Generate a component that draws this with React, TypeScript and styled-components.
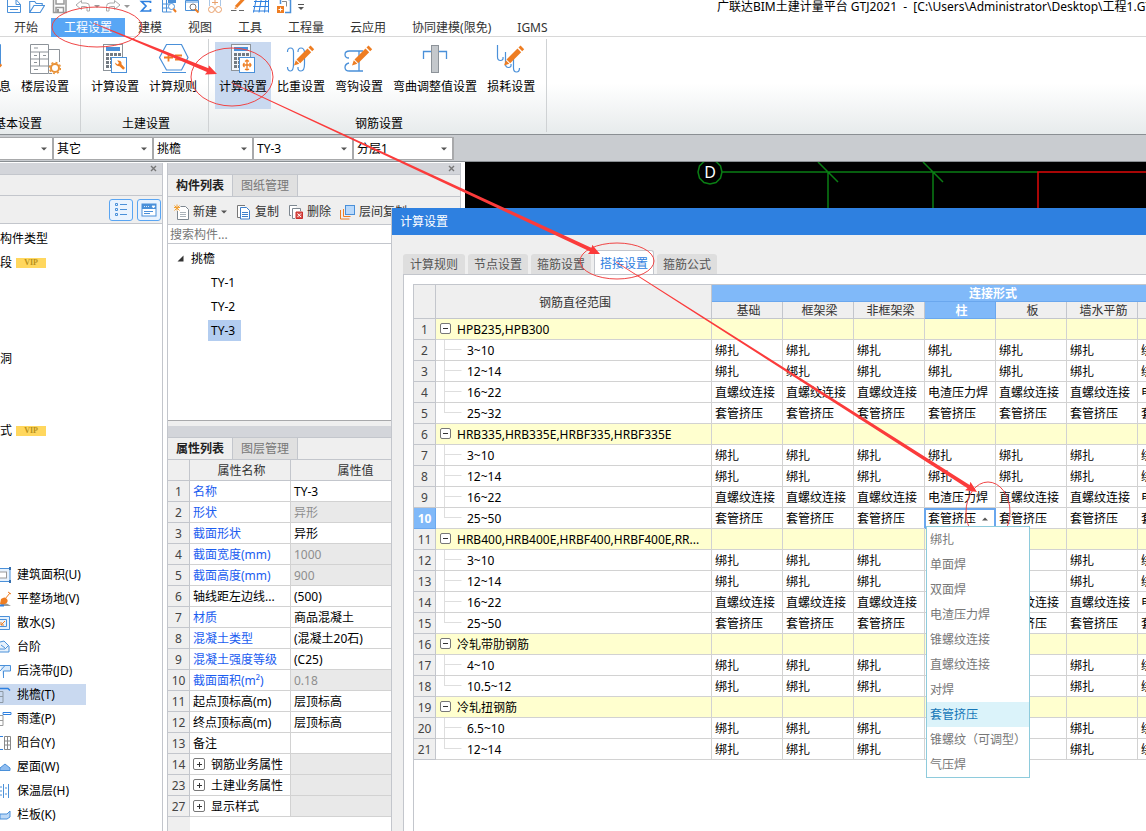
import React from "react";
import styled, { createGlobalStyle, css } from "styled-components";

const LINE = "#c3c6cc";
const PANEL = "#efefef";
const STRIP = "#d3d5da";
const BLUE = "#2e80e0";
const ICON_BLUE = "#4a90d9";
const ORANGE = "#ee7d22";
const GREY = "#8d9399";

const Global = createGlobalStyle`
  *, *::before, *::after { box-sizing: border-box; }
  html, body { margin: 0; height: 100%; overflow: hidden; }
  body, button, input, select, table {
    font-family: "Noto Sans", "Noto Sans CJK SC", sans-serif;
    font-size: 12px;
    line-height: 16px;
    color: #000;
  }
  button, input, select { margin: 0; padding: 0; border: 0; background: none; border-radius: 0; }
  button { white-space: nowrap; }
  ul { list-style: none; margin: 0; padding: 0; }
  svg { display: block; flex: none; }
`;

const Shell = styled.div`
  position: relative;
  display: flex;
  flex-direction: column;
  height: 100vh;
  overflow: hidden;
  background: #fff;
`;

/* ---------- title bar and ribbon ---------- */

const TitleBar = styled.header`
  display: flex;
  height: 18px;
  padding-left: 2px;
  overflow: hidden;
`;

const QuickButton = styled.button<{ $narrow?: boolean; $gap?: boolean }>`
  display: flex;
  justify-content: center;
  flex: none;
  width: ${(p) => (p.$narrow ? 7 : 23)}px;
  margin-left: ${(p) => (p.$gap ? 3 : 0)}px;
`;

const Title = styled.h1`
  margin: 0 0 0 412px;
  font-size: 12px;
  line-height: 14px;
  font-weight: 400;
  white-space: pre;
`;

const RibbonTabs = styled.nav`
  display: flex;
  height: 19px;
  padding-left: 1px;
  border-bottom: 1px solid #d8d8d8;
`;

const RibbonTab = styled.button<{ $active?: boolean }>`
  height: 19px;
  padding: 0 13px;
  line-height: 19px;
  color: ${(p) => (p.$active ? "#fff" : "#333")};
  background: ${(p) => (p.$active ? "#58a6f5" : "transparent")};
`;

const Ribbon = styled.div`
  display: flex;
  height: 98px;
  padding-top: 2px;
  background: linear-gradient(#fff 48%, #e7ebec);
  border-bottom: 1px solid #8a8f93;
  overflow: hidden;
`;

const RibbonGroup = styled.section<{ $cut?: boolean }>`
  display: flex;
  flex: none;
  flex-direction: column;
  justify-content: space-between;
  height: 93px;
  padding: 3px 7px 0 6px;
  border-right: 1px solid #cfd2d4;
  margin-left: ${(p) => (p.$cut ? -47 : 0)}px;
`;

const RibbonItems = styled.div`
  display: flex;
  gap: 2px;
`;

const RibbonButton = styled.button<{ $active?: boolean }>`
  display: flex;
  flex-direction: column;
  align-items: center;
  gap: 4px;
  height: 67px;
  padding: 1px 4px 0;
  background: ${(p) => (p.$active ? "#c9d9f0" : "transparent")};
`;

const GroupName = styled.h2`
  margin: 0;
  padding-left: 4px;
  font-size: 12px;
  font-weight: 400;
  text-align: center;
`;

/* ---------- filter bar ---------- */

const FilterBar = styled.div`
  display: flex;
  height: 27px;
  padding-top: 2px;
  background: #c9ccd0;
  border-bottom: 1px solid #8a8f93;
`;

const Combo = styled.label<{ $first?: boolean }>`
  display: grid;
  align-items: center;
  flex: none;
  width: ${(p) => (p.$first ? 54 : 100)}px;
  height: 23px;
  background: #fff;
  border: solid #a8a9ab;
  border-width: 1px 2px 1px 0;
  & > * { grid-area: 1 / 1; }
  & > svg { justify-self: end; margin-right: 5px; pointer-events: none; }
`;

const ComboSelect = styled.select`
  appearance: none;
  width: 100%;
  height: 21px;
  padding-left: 3px;
  outline: 0;
`;

/* ---------- docked panels ---------- */

const Main = styled.main`
  display: flex;
  flex: 1;
  min-height: 0;
  padding-top: 1px;
`;

const NavPanel = styled.aside`
  flex: none;
  width: 163px;
  border-right: 1px solid ${LINE};
  overflow: hidden;
`;

const Strip = styled.div`
  display: flex;
  justify-content: flex-end;
  align-items: center;
  height: 12px;
  padding-right: 5px;
  background: ${STRIP};
  border-bottom: 1px solid ${LINE};
`;

const NavBlank = styled.div`
  height: 21px;
  background: ${PANEL};
  border-bottom: 1px solid ${LINE};
`;

const NavTools = styled.div`
  display: flex;
  justify-content: flex-end;
  gap: 4px;
  height: 28px;
  padding: 3px 1px 0 0;
  background: ${PANEL};
  border-bottom: 1px solid ${LINE};
`;

const ToggleButton = styled.button`
  display: flex;
  align-items: center;
  justify-content: center;
  width: 24px;
  height: 22px;
  border: 1px solid #5aa5f2;
  border-radius: 3px;
  background: #e9f3fe;
`;

const NavList = styled.ul`
  padding-top: 2px;
`;

const NavRow = styled.li`
  display: flex;
  align-items: center;
  height: 24px;
`;

const NavButton = styled.button<{ $active?: boolean }>`
  display: flex;
  align-items: center;
  gap: 4px;
  width: ${(p) => (p.$active ? "86px" : "auto")};
  height: 21px;
  padding-top: 2px;
  background: ${(p) => (p.$active ? "#c9d9f0" : "transparent")};
`;

const Vip = styled.span`
  width: 30px;
  height: 10px;
  background: #ffd75e;
  color: #b8901c;
  font: 700 8px/10px "Liberation Serif", serif;
  text-align: center;
`;

const ComponentPanel = styled.aside`
  display: flex;
  flex: none;
  flex-direction: column;
  width: 294px;
  margin: 0 4px;
  background: ${PANEL};
  border: solid ${LINE};
  border-width: 0 1px;
`;

const DockTabs = styled.div`
  display: flex;
  height: 22px;
  border-bottom: 1px solid ${LINE};
`;

const DockTab = styled.button<{ $active?: boolean }>`
  width: 65px;
  border-right: 1px solid ${LINE};
  line-height: 21px;
  ${(p) =>
    p.$active
      ? css`font-weight: 700; color: #222;`
      : css`background: #e0e0e0; color: #777;`}
`;

const DockTools = styled.div`
  display: flex;
  align-items: center;
  gap: 9px;
  height: 28px;
  padding: 2px 0 0 6px;
  border-bottom: 1px solid ${LINE};
  overflow: hidden;
`;

const ToolButton = styled.button`
  display: flex;
  align-items: center;
  gap: 4px;
  color: #333;
`;

const Search = styled.input`
  flex: none;
  height: 19px;
  padding-left: 2px;
  background: #fff;
  border-bottom: 1px solid ${LINE};
  outline: 0;
  &::placeholder { color: #777; opacity: 1; }
`;

const Tree = styled.ul`
  flex: none;
  height: 177px;
  margin-bottom: 5px;
  padding-top: 2px;
  background: #fff;
  border-bottom: 1px solid #a8a9ab;
`;

const TreeRow = styled.li<{ $root?: boolean }>`
  display: flex;
  align-items: center;
  gap: 7px;
  height: 24px;
  padding-left: ${(p) => (p.$root ? 9 : 40)}px;
`;

const TreeItem = styled.button<{ $active?: boolean; $leaf?: boolean }>`
  min-width: ${(p) => (p.$leaf ? 33 : 0)}px;
  height: 21px;
  padding: 2px ${(p) => (p.$leaf ? 3 : 0)}px 0;
  text-align: left;
  background: ${(p) => (p.$active ? "#b3cdf0" : "transparent")};
`;

const GridTable = styled.table`
  table-layout: fixed;
  border-collapse: separate;
  border-spacing: 0;
  th, td {
    height: 21px;
    padding: 2px 0 0 3px;
    border: solid #d2d2d2;
    border-width: 0 1px 1px 0;
    font-weight: 400;
    text-align: left;
    white-space: nowrap;
    line-height: 18px;
  }
  thead th {
    background: ${PANEL};
    border-color: ${LINE};
    text-align: center;
    color: #333;
  }
`;

const PropTable = styled(GridTable)`
  width: 250px;
  background: #fff;
`;

const NumberCell = styled.th<{ $active?: boolean }>`
  && {
    padding: 2px 0 0;
    background: ${(p) => (p.$active ? "#80b9f9" : PANEL)};
    border-color: ${(p) => (p.$active ? "#6aa7ee" : LINE)};
    color: ${(p) => (p.$active ? "#fff" : "#444")};
    font-weight: ${(p) => (p.$active ? 700 : 400)};
    text-align: center;
  }
`;

const PropName = styled.td<{ $linked?: boolean }>`
  color: ${(p) => (p.$linked ? "#1a5cf0" : "#000")};
`;

const PropValue = styled.td<{ $locked?: boolean }>`
  color: #000;
  ${(p) => p.$locked && css`background: #e9e9e9; color: #8e8e8e;`}
`;

const Expandable = styled.span`
  display: flex;
  align-items: flex-start;
  gap: 6px;
  height: 18px;
`;

const Expander = styled.button<{ $large?: boolean }>`
  display: grid;
  place-items: center;
  width: ${(p) => (p.$large ? 12 : 11)}px;
  height: ${(p) => (p.$large ? 12 : 11)}px;
  margin-top: 2px;
  border: 1px solid #777;
  border-radius: 2px;
  background: #fff;
`;

const BelowTable = styled.div`
  flex: 1;
  min-height: 0;
  border-left: 22px solid ${PANEL};
  background: #fff;
`;

const Canvas = styled.div`
  flex: 1;
  min-width: 0;
  margin-top: -1px;
  background: #000;
  overflow: hidden;
`;

/* ---------- settings window ---------- */

const Window = styled.section`
  position: absolute;
  left: 391px;
  top: 208px;
  right: 0;
  bottom: 0;
  display: flex;
  flex-direction: column;
  background: ${PANEL};
  border-left: 1px solid ${LINE};
  overflow: hidden;
`;

const WindowTitle = styled.h2`
  flex: none;
  height: 27px;
  margin: 0 0 0 -1px;
  padding-left: 9px;
  background: ${BLUE};
  color: #fff;
  font-size: 12px;
  line-height: 27px;
  font-weight: 400;
`;

const WindowTabs = styled.div`
  display: flex;
  align-items: flex-end;
  flex: none;
  gap: 3px;
  height: 40px;
  margin-bottom: -1px;
  padding-left: 11px;
`;

const WindowTab = styled.button<{ $active?: boolean; $first?: boolean }>`
  width: ${(p) => (p.$first ? 62 : 60)}px;
  height: 20px;
  margin-bottom: 1px;
  line-height: 21px;
  border-radius: 3px 3px 0 0;
  background: #dedede;
  color: #555;
  ${(p) =>
    p.$active &&
    css`
      height: 25px;
      margin-bottom: 0;
      line-height: 26px;
      background: #fff;
      color: ${BLUE};
      border: solid ${LINE};
      border-width: 1px 1px 0;
    `}
`;

const WindowBody = styled.div`
  display: flex;
  flex: 1;
  min-height: 0;
  margin-left: 11px;
  padding: 9px 0 0 9px;
  background: #fff;
  border: solid ${LINE};
  border-width: 1px 0 0 1px;
`;

const GridFrame = styled.div`
  flex: 1;
  min-width: 0;
  border: solid ${LINE};
  border-width: 1px 0 0 1px;
  overflow: hidden;
`;

const LapTable = styled(GridTable)`
  width: 858px;
`;

const HeadCell = styled.th<{ $active?: boolean }>`
  && {
    height: 17px;
    line-height: 14px;
    ${(p) =>
      p.$active &&
      css`
        background: #80b9f9;
        border-color: #6aa7ee;
        color: #fff;
        font-weight: 700;
      `}
  }
`;

const CategoryRow = styled.tr`
  td { background: #ffffcf; }
`;

const RangeCell = styled.td<{ $branch?: boolean }>`
  && { padding: ${(p) => (p.$branch ? 0 : 2)}px 0 0 4px; }
`;

const RangeText = styled.span`
  display: flex;
  gap: 4px;
  height: 20px;
  line-height: 22px;
`;

const EditCell = styled.td`
  && {
    position: relative;
    padding: 0;
    border-color: #6aa7ee;
  }
`;

const CellCombo = styled.label`
  display: grid;
  align-items: center;
  height: 20px;
  margin-left: -1px;
  border: solid #6aa7ee;
  border-width: 2px 1px 0 2px;
  & > * { grid-area: 1 / 1; }
  & > svg { justify-self: end; margin-right: 6px; pointer-events: none; }
`;

const CellSelect = styled.select`
  appearance: none;
  width: 100%;
  height: 18px;
  padding-left: 2px;
  outline: 0;
`;

const Menu = styled.ul`
  position: absolute;
  z-index: 2;
  left: 1px;
  top: 18px;
  width: 104px;
  background: #fff;
  border: 1px solid #8ecbdc;
`;

const MenuItem = styled.li<{ $active?: boolean }>`
  height: 25px;
  padding-left: 3px;
  line-height: 25px;
  color: ${(p) => (p.$active ? "#1577b8" : "#777")};
  background: ${(p) => (p.$active ? "#dbf3fa" : "#fff")};
`;

const Markup = styled.svg`
  position: absolute;
  left: 0;
  top: 0;
  overflow: visible;
  pointer-events: none;
`;

/* ---------- icons ---------- */

const Caret = ({ up, color = "#555" }: { up?: boolean; color?: string }) => (
  <svg width="6" height="4" viewBox="0 0 6 4">
    <path d={up ? "M0 3.5h6L3 .5z" : "M0 .5h6L3 3.5z"} fill={color} />
  </svg>
);

const Cross = () => (
  <svg width="7" height="7" viewBox="0 0 7 7">
    <path d="M1 1l5 5M6 1L1 6" stroke="#777" strokeWidth="1.4" />
  </svg>
);

const quickArt: Record<string, React.ReactNode> = {
  new: (
    <g fill="none" stroke={ICON_BLUE}>
      <path d="M1.500 -1v13.500h13V4.500L10 -.5M1.500 6.500h13M4 9.500h8M10 0v4.500h4.500" />
    </g>
  ),
  open: <path d="M.7 12V1.500h5l1.500 2h6V5.500M.7 12.500h10.500L15.500 5.500H5z" fill="none" stroke={ICON_BLUE} strokeWidth="1.100" />,
  save: (
    <g fill="none" stroke="#999">
      <path d="M1.500 -2v14.500h12.500V-2" strokeWidth="1.500" />
      <path d="M4 -1v5h8v-5M4 12V7.500h7.500V12" strokeWidth="1.500" />
      <path d="M6 9v3" strokeWidth="2" />
    </g>
  ),
  undo: <path d="M1 5L6.500 .5v2.500h4.500q3.500 0 3.500 3.500v4.500h-2.500v-3q0-1.500-1.500-1.500h-4v3z" fill="none" stroke="#aaa" />,
  redo: <path d="M15 5L9.500 .5v2.500h-4.500q-3.500 0-3.500 3.500v4.500h2.500v-3q0-1.500 1.500-1.500h4v3z" fill="none" stroke="#aaa" />,
  sum: <path d="M12.500 3V1.500h-9L8 6l-4.500 5h9V9" fill="none" stroke={BLUE} strokeWidth="1.700" />,
  sheetFind: (
    <g fill="none" stroke={ICON_BLUE}>
      <path d="M1.500 -1v13h9M5.500 -1v13M1.500 4h8M1.500 8h6" />
      <rect x="7" y="-1" width="8" height="4" fill={ICON_BLUE} stroke="none" />
      <circle cx="10.500" cy="6.500" r="3" fill="#fff" />
      <path d="M12.500 9l2.500 3" stroke={ORANGE} strokeWidth="2" />
    </g>
  ),
  windowFind: (
    <g fill="none" stroke={ICON_BLUE}>
      <path d="M1.500 .5h13v10h-13zM1.500 2h13" />
      <circle cx="9" cy="7" r="3" fill="#fff" stroke="#777" />
      <path d="M11 9l3.500 3.500" stroke={ORANGE} strokeWidth="2" />
    </g>
  ),
  glasses: (
    <g fill="none" stroke="#e9a06b">
      <path d="M2.500 6V-1h11v7" stroke="#a9c6e6" />
      <path d="M5 2.500h6M8 0v5" />
      <circle cx="4.500" cy="9.500" r="3" />
      <circle cx="11.500" cy="9.500" r="3" />
    </g>
  ),
  pencil: (
    <g fill="none">
      <path d="M13.500 -1L6 7" stroke={ORANGE} strokeWidth="3" />
      <path d="M4.500 9l.5-2 2 1.500z" fill={ORANGE} />
      <path d="M1 10.500h5.500M9 10.500h5" stroke="#666" />
    </g>
  ),
  mesh: <path d="M3.500 -2L.5 12.500M8.500 -2L6 12.500M13 -2L11.500 12.500M15.500 -2v14.500M1 1.500h14.500M0 6.500h15.500M0 11h15.500" fill="none" stroke={BLUE} />,
  addSheet: (
    <g fill="none">
      <path d="M4.500 4V-1M12 -.5h2.500V12.500H9" stroke={ICON_BLUE} strokeWidth="1.500" />
      <path d="M6 1.500h4.500v5" stroke="#888" />
      <rect x="1" y="6" width="7" height="7" fill={ORANGE} />
      <path d="M4.500 7.500v4M2.500 9.500h4" stroke="#fff" />
    </g>
  ),
};

const QuickIcon = ({ name }: { name: string }) => (
  <svg width="16" height="14" viewBox="0 0 16 14">{quickArt[name]}</svg>
);

const SmallCaret = ({ bar }: { bar?: boolean }) => (
  <svg width="7" height="14" viewBox="0 0 7 14">
    {bar && <path d="M0 4.500h6" stroke="#555" />}
    <path d={bar ? "M0 7h6L3 10z" : "M0 5h6L3 8z"} fill={bar ? "#555" : "#999"} />
  </svg>
);

const Calculator = ({ fill = "#fff" }: { fill?: string }) => (
  <g>
    <rect x="4.500" y="1.500" width="19" height="26" fill={fill} stroke={GREY} />
    <rect x="7" y="4" width="14" height="4" fill={ICON_BLUE} />
    {[10, 14, 18, 22].map((y) =>
      [7, 11, 15, 19].map((x) => <rect key={`${x}-${y}`} x={x} y={y} width="3" height="3" fill="#737a82" />)
    )}
    <rect x="12.500" y="14.500" width="15" height="15" fill="#fff" stroke={ICON_BLUE} />
  </g>
);

const Pencil = () => (
  <g fill={ORANGE}>
    <path d="M9 22.500l1.800-5.300 3.500 3.500z" />
    <path d="M11.500 16.500L22.500 5.500l3.700 3.700-11 11z" />
    <path d="M23.500 4.500l2-2 3.700 3.700-2 2z" />
  </g>
);

const ribbonArt: Record<string, React.ReactNode> = {
  info: (
    <g>
      <path d="M6 1.500h23.500v22" fill="none" stroke={ICON_BLUE} />
      <path d="M26 24.500l4-4 1 2-4 4z" fill={ORANGE} />
    </g>
  ),
  floors: (
    <g fill="none" stroke={GREY}>
      <path d="M1.500 1.500h18v29h-18zM20 6.500h10.500V19M1.500 9h18M1.500 16h18M1.500 23h18M10.500 9v14M20 23h2" />
      <path d="M5 5h4M5 12.500h3M14 12.500h3M5 19.500h3M5 26.500h4" />
      <path d="M20 30.500h3" />
      <circle cx="26" cy="25" r="4" stroke="#e99238" strokeWidth="2" />
      <circle cx="26" cy="25" r="5.500" stroke="#e99238" strokeWidth="1.500" strokeDasharray="2 2.300" />
    </g>
  ),
  calc: (
    <g>
      <Calculator />
      <path d="M16 19.500l2.500 2 1.500-1.500-1.800-2.500q3.500-.5 4.300 2v1.800l3.500 3.700-1.800 1.800-3.700-3.500q-4 0-4.500-3.800z" fill={ORANGE} />
    </g>
  ),
  calcRebar: (
    <g>
      <Calculator fill="#f4f7fc" />
      <path d="M20 17.500v9M16 22h8.500M17.500 20q-2.500 2 0 4M22.500 20q2.500 2 0 4M18 18.500l2-1.500 2 1.500M18 26q2 1.500 4 0" fill="none" stroke={ORANGE} strokeWidth="1.300" />
    </g>
  ),
  rules: (
    <g fill="none" stroke={ICON_BLUE}>
      <path d="M2.500 14.500L9.500 1.500h15l6.500 13-6.500 12.500h-15zM5 29.500h24" strokeWidth="1.200" />
      <path d="M7 14.500h9M11.500 10.500v8M18 12.500h7M18 16.500h7" stroke={ORANGE} strokeWidth="1.800" />
    </g>
  ),
  weight: (
    <g>
      <path d="M2.500 9q0-4 3-4t3 4v12q0 7-3 7t-3-4M13 9q0-4 3-4t3.500 4v12q0 7-3.500 7t-3-4" fill="none" stroke={ICON_BLUE} strokeWidth="1.200" />
      <Pencil />
    </g>
  ),
  hook: (
    <g>
      <path d="M20 8H6.500Q2 8 2 11.500T6 15M20 28H6.500Q2 28 2 24.500T6 20M16 8v20" fill="none" stroke={ICON_BLUE} strokeWidth="1.300" />
      <Pencil />
    </g>
  ),
  bend: (
    <g>
      <path d="M4.500 16V8.500h23V16" fill="none" stroke={ICON_BLUE} strokeWidth="1.300" />
      <rect x="12.500" y="2.500" width="7" height="27" fill="#c4c8cc" stroke={GREY} />
    </g>
  ),
  loss: (
    <g>
      <path d="M2.500 2v12q0 3.500 3 3.500T8 14M10.500 9v12q0 3.500 3 3.500T16 21M18.500 16v9q0 4 3 4t3-4" fill="none" stroke={ICON_BLUE} strokeWidth="1.200" />
      <Pencil />
    </g>
  ),
};

const RibbonIcon = ({ name }: { name: string }) => (
  <svg width="32" height="32" viewBox="0 0 32 32">{ribbonArt[name]}</svg>
);

const navArt: Record<string, React.ReactNode> = {
  area: (
    <g fill="none">
      <path d="M0 1.500h10v13H0" stroke={ICON_BLUE} fill="#e6f1fc" />
      <rect x="-3" y="5" width="9.500" height="6" stroke="#999" fill="#fff" />
      <path d="M9 0h2v3H9zM9 13h2v3H9z" fill="#376fae" />
    </g>
  ),
  level: (
    <g>
      <path d="M0 15q3-6 11 0z" fill="#999" />
      <path d="M1 8q4-3 6 0t-2 5q-3 1-5 0z" fill={ORANGE} />
      <path d="M5 8l5-6M8 1l3 2" stroke={ORANGE} />
      <path d="M0 14.500h4" stroke={BLUE} strokeWidth="2" />
    </g>
  ),
  apron: (
    <g fill="none">
      <path d="M0 1.500h9.500v13H0M0 4.500h6.500v7H0" stroke={ICON_BLUE} fill="#e6f1fc" />
      <path d="M5 6L1 10M1 7v3h3" stroke={ORANGE} />
    </g>
  ),
  steps: <path d="M0 3l4-1 5 5v6H0M0 10h5l3-3M1 6l4 3" fill="#e6f1fc" stroke={ICON_BLUE} />,
  strip: <path d="M0 2.500h10.500v5.500H3.500v7M0 8l5-5.500" fill="#d9eafb" stroke={ICON_BLUE} />,
  eave: (
    <g fill="none" stroke="#8d99a5">
      <path d="M0 4.500h3v11H0M0 9.500h3" />
      <path d="M0 1.500h8l2 2" stroke={BLUE} strokeWidth="1.500" />
    </g>
  ),
  canopy: (
    <g fill="none" stroke="#999">
      <path d="M0 4.500h3v10H0M0 9.500h3" />
      <path d="M3 1.500h8v2H3z" stroke={BLUE} />
    </g>
  ),
  balcony: (
    <g fill="none" stroke="#888">
      <path d="M4.500 1.500h6v13h-6zM7.500 1.500v13M4.500 6h6M4.500 10h6" />
      <path d="M0 1.500h3M0 14.500h3" stroke={BLUE} />
    </g>
  ),
  roof: <path d="M0 9l5-4 5 4v2.500H0z" fill="#8fbdf0" stroke={ICON_BLUE} />,
  insulation: <path d="M0 4h2M0 8h2M0 12h2M3.500 1v14M8.500 1v14M5 5h2M5 11h2" stroke={ICON_BLUE} />,
  slab: <path d="M0 7h7l3-3v6l-3 2H0z" fill="#bcd8f6" stroke={ICON_BLUE} />,
};

const dockArt: Record<string, React.ReactNode> = {
  new: (
    <g fill="none" stroke="#7d8790">
      <path d="M6.500 2.500h5l3 3v10h-11V7" fill="#fff" />
      <path d="M6 8.500h6M6 10.500h6M6 12.500h6" stroke="#aab2b9" />
      <path d="M.5 1.500l5 5M5.500 1.500l-5 5M3 .5v6M0 3.500h6" stroke="#f2a033" />
    </g>
  ),
  copy: (
    <g fill="#fff" stroke="#3d7fcb">
      <path d="M9 1.500H1.500v12H4" stroke="#777" />
      <path d="M4.500 3.500h6l3 3v8.500h-9z" />
      <path d="M6 8.500h6M6 10.500h6M6 12.500h6" />
    </g>
  ),
  remove: (
    <g fill="#fff" stroke="#7d8790">
      <path d="M9 1.500H1.500v10H3" />
      <path d="M12.500 7V4.500h-8v10H7" />
      <path d="M8 8h6.500v6.500H8z" fill="#d9534f" stroke="#c9302c" />
      <path d="M9.500 9.500l3.500 3.500M13 9.500L9.500 13" stroke="#fff" />
    </g>
  ),
  layer: (
    <g fill="none">
      <path d="M.5 6v9h9" stroke={ORANGE} />
      <path d="M3.500 5v7.500h7" stroke={ORANGE} />
      <rect x="5.500" y="1.500" width="9" height="9" fill="#b9d9fb" stroke={ICON_BLUE} />
    </g>
  ),
};

const DockIcon = ({ name }: { name: string }) => (
  <svg width="15" height="16" viewBox="0 0 15 16">{dockArt[name]}</svg>
);

const Sign = ({ plus }: { plus?: boolean }) => (
  <svg width="5" height="5" viewBox="0 0 5 5">
    <path d={plus ? "M0 2.500h5M2.500 0v5" : "M0 2.500h5"} stroke="#333" />
  </svg>
);

const Branch = ({ last }: { last?: boolean }) => (
  <svg width="23" height="20" viewBox="0 0 23 20">
    <path d={last ? "M4.500 0v10M4.500 9.500h17" : "M4.500 0v20M4.500 9.500h17"} stroke="#dedede" fill="none" />
  </svg>
);

/* ---------- data ---------- */

const ribbonTabs = ["开始", "工程设置", "建模", "视图", "工具", "工程量", "云应用", "协同建模(限免)", "IGMS"];

const ribbonGroups = [
  { name: "基本设置", items: [["info", "工程信息"], ["floors", "楼层设置"]] },
  { name: "土建设置", items: [["calc", "计算设置"], ["rules", "计算规则"]] },
  {
    name: "钢筋设置",
    items: [["calcRebar", "计算设置"], ["weight", "比重设置"], ["hook", "弯钩设置"], ["bend", "弯曲调整值设置"], ["loss", "损耗设置"]],
  },
];

type NavEntry = { text?: string; vip?: boolean; icon?: string };
const navRows: NavEntry[] = [
  { text: "构件类型" }, { text: "段", vip: true }, {}, {}, {}, { text: "洞" }, {}, {},
  { text: "式", vip: true }, {}, {}, {}, {}, {},
  { icon: "area", text: "建筑面积(U)" },
  { icon: "level", text: "平整场地(V)" },
  { icon: "apron", text: "散水(S)" },
  { icon: "steps", text: "台阶" },
  { icon: "strip", text: "后浇带(JD)" },
  { icon: "eave", text: "挑檐(T)" },
  { icon: "canopy", text: "雨蓬(P)" },
  { icon: "balcony", text: "阳台(Y)" },
  { icon: "roof", text: "屋面(W)" },
  { icon: "insulation", text: "保温层(H)" },
  { icon: "slab", text: "栏板(K)" },
];

type Prop = { no: number; name: string; value?: string; linked?: boolean; locked?: boolean; group?: boolean };
const props: Prop[] = [
  { no: 1, name: "名称", value: "TY-3", linked: true },
  { no: 2, name: "形状", value: "异形", linked: true, locked: true },
  { no: 3, name: "截面形状", value: "异形", linked: true },
  { no: 4, name: "截面宽度(mm)", value: "1000", linked: true, locked: true },
  { no: 5, name: "截面高度(mm)", value: "900", linked: true, locked: true },
  { no: 6, name: "轴线距左边线...", value: "(500)" },
  { no: 7, name: "材质", value: "商品混凝土", linked: true },
  { no: 8, name: "混凝土类型", value: "(混凝土20石)", linked: true },
  { no: 9, name: "混凝土强度等级", value: "(C25)", linked: true },
  { no: 10, name: "截面面积(m²)", value: "0.18", linked: true, locked: true },
  { no: 11, name: "起点顶标高(m)", value: "层顶标高" },
  { no: 12, name: "终点顶标高(m)", value: "层顶标高" },
  { no: 13, name: "备注" },
  { no: 14, name: "钢筋业务属性", locked: true, group: true },
  { no: 23, name: "土建业务属性", locked: true, group: true },
  { no: 27, name: "显示样式", locked: true, group: true },
];

const lapColumns = ["基础", "框架梁", "非框架梁", "柱", "板", "墙水平筋", "墙垂直筋", "其它"];
const COLUMN = 3;

const tie = lapColumns.map(() => "绑扎");
const sleeve = lapColumns.map(() => "套管挤压");
const thread = lapColumns.map((_, i) => (i === COLUMN || i === 6 ? "电渣压力焊" : "直螺纹连接"));

const sections: { name: string; rows: [string, string[]][] }[] = [
  { name: "HPB235,HPB300", rows: [["3~10", tie], ["12~14", tie], ["16~22", thread], ["25~32", sleeve]] },
  { name: "HRB335,HRB335E,HRBF335,HRBF335E", rows: [["3~10", tie], ["12~14", tie], ["16~22", thread], ["25~50", sleeve]] },
  { name: "HRB400,HRB400E,HRBF400,HRBF400E,RR...", rows: [["3~10", tie], ["12~14", tie], ["16~22", thread], ["25~50", sleeve]] },
  { name: "冷轧带肋钢筋", rows: [["4~10", tie], ["10.5~12", tie]] },
  { name: "冷轧扭钢筋", rows: [["6.5~10", tie], ["12~14", tie]] },
];

const joints = ["绑扎", "单面焊", "双面焊", "电渣压力焊", "锥螺纹连接", "直螺纹连接", "对焊", "套管挤压", "锥螺纹（可调型）", "气压焊"];

/* ---------- parts ---------- */

const FilterCombo = ({ name, value, first }: { name: string; value: string; first?: boolean }) => (
  <Combo $first={first}>
    <ComboSelect aria-label={name} defaultValue={value}>
      <option>{value}</option>
    </ComboSelect>
    <Caret />
  </Combo>
);

const JointEditor = () => (
  <EditCell>
    <CellCombo>
      <CellSelect aria-label="连接形式" defaultValue="套管挤压">
        {joints.map((j) => <option key={j}>{j}</option>)}
      </CellSelect>
      <Caret up />
    </CellCombo>
    <Menu role="listbox" aria-label="连接形式">
      {joints.map((j) => (
        <MenuItem key={j} role="option" aria-selected={j === "套管挤压"} $active={j === "套管挤压"}>{j}</MenuItem>
      ))}
    </Menu>
  </EditCell>
);

const LapGrid = () => {
  let no = 0;
  return (
    <LapTable>
      <colgroup>
        <col style={{ width: 22 }} />
        <col style={{ width: 276 }} />
        {lapColumns.map((c, i) => <col key={c} style={{ width: i === 7 ? 63 : 71 }} />)}
      </colgroup>
      <thead>
        <tr>
          <HeadCell rowSpan={2} aria-label="序号" />
          <HeadCell rowSpan={2}>钢筋直径范围</HeadCell>
          <HeadCell colSpan={8} $active>连接形式</HeadCell>
        </tr>
        <tr>
          {lapColumns.map((c, i) => <HeadCell key={c} $active={i === COLUMN}>{c}</HeadCell>)}
        </tr>
      </thead>
      <tbody>
        {sections.map((s) => (
          <React.Fragment key={s.name}>
            <CategoryRow>
              <NumberCell>{++no}</NumberCell>
              <RangeCell>
                <Expandable>
                  <Expander aria-label="折叠"><Sign /></Expander>
                  {s.name}
                </Expandable>
              </RangeCell>
              {lapColumns.map((c) => <td key={c} />)}
            </CategoryRow>
            {s.rows.map(([range, values], r) => {
              const current = ++no;
              return (
                <tr key={range}>
                  <NumberCell $active={current === 10}>{current}</NumberCell>
                  <RangeCell $branch>
                    <RangeText>
                      <Branch last={r === s.rows.length - 1} />
                      {range}
                    </RangeText>
                  </RangeCell>
                  {values.map((v, i) =>
                    current === 10 && i === COLUMN ? <JointEditor key={i} /> : <td key={i}>{v}</td>
                  )}
                </tr>
              );
            })}
          </React.Fragment>
        ))}
      </tbody>
    </LapTable>
  );
};

const Arrow = ({ from, to }: { from: [number, number]; to: [number, number] }) => {
  const length = Math.hypot(to[0] - from[0], to[1] - from[1]);
  const angle = (Math.atan2(to[1] - from[1], to[0] - from[0]) * 180) / Math.PI;
  const neck = length - 10;
  return (
    <path
      transform={`translate(${from[0]} ${from[1]}) rotate(${angle})`}
      d={`M0 -.4L${neck} -2L${neck - 1} -5L${length} 0L${neck - 1} 5L${neck} 2L0 .4z`}
      fill="#fb3b3b"
    />
  );
};

export default function App() {
  return (
    <Shell>
      <Global />
      <TitleBar>
        {["new", "open", "save", "undo"].map((n) => (
          <QuickButton key={n} aria-label={n}><QuickIcon name={n} /></QuickButton>
        ))}
        <QuickButton $narrow aria-label="undo list"><SmallCaret /></QuickButton>
        <QuickButton aria-label="redo"><QuickIcon name="redo" /></QuickButton>
        <QuickButton $narrow aria-label="redo list"><SmallCaret /></QuickButton>
        {["sum", "sheetFind", "windowFind", "glasses", "pencil", "mesh", "addSheet"].map((n, i) => (
          <QuickButton key={n} $gap={i === 0} aria-label={n}><QuickIcon name={n} /></QuickButton>
        ))}
        <QuickButton $narrow $gap aria-label="more"><SmallCaret bar /></QuickButton>
        <Title>{"广联达BIM土建计量平台 GTJ2021  -  [C:\\Users\\Administrator\\Desktop\\工程1.GTJ]"}</Title>
      </TitleBar>
      <RibbonTabs>
        {ribbonTabs.map((t) => <RibbonTab key={t} $active={t === "工程设置"}>{t}</RibbonTab>)}
      </RibbonTabs>
      <Ribbon>
        {ribbonGroups.map((g, i) => (
          <RibbonGroup key={g.name} $cut={i === 0}>
            <RibbonItems>
              {g.items.map(([icon, label]) => (
                <RibbonButton key={icon} $active={icon === "calcRebar"}>
                  <RibbonIcon name={icon} />
                  {label}
                </RibbonButton>
              ))}
            </RibbonItems>
            <GroupName>{g.name}</GroupName>
          </RibbonGroup>
        ))}
      </Ribbon>
      <FilterBar>
        <FilterCombo name="楼层" value="" first />
        <FilterCombo name="类别" value="其它" />
        <FilterCombo name="构件类型" value="挑檐" />
        <FilterCombo name="构件" value="TY-3" />
        <FilterCombo name="分层" value="分层1" />
      </FilterBar>
      <Main>
        <NavPanel>
          <Strip><Cross /></Strip>
          <NavBlank />
          <NavTools>
            <ToggleButton aria-label="列表">
              <svg width="14" height="14" viewBox="0 0 14 14" fill="none" stroke={ICON_BLUE}>
                <path d="M1.500 .5h2v2h-2zM1.500 5.500h2v2h-2zM1.500 10.500h2v2h-2zM6 1.500h7M6 6.500h7M6 11.500h7" />
              </svg>
            </ToggleButton>
            <ToggleButton aria-label="面板">
              <svg width="16" height="14" viewBox="0 0 16 14">
                <rect x="1" y="1" width="14" height="12" fill="#fff" stroke={ICON_BLUE} />
                <rect x="1" y="1" width="14" height="5" fill={ICON_BLUE} />
                <path d="M3 3.500h1M5 3.500h1M7 3.500h1M11 3h3l-1.500 2z" stroke="#fff" fill="#fff" strokeWidth=".8" />
                <path d="M3 8.500h9M3 10.500h6" stroke={ICON_BLUE} />
              </svg>
            </ToggleButton>
          </NavTools>
          <NavList>
            {navRows.map((r, i) => (
              <NavRow key={i}>
                {r.text && (
                  <NavButton $active={r.icon === "eave"}>
                    {r.icon && <svg width="13" height="16" viewBox="0 0 13 16">{navArt[r.icon]}</svg>}
                    {r.text}
                    {r.vip && <Vip>VIP</Vip>}
                  </NavButton>
                )}
              </NavRow>
            ))}
          </NavList>
        </NavPanel>
        <ComponentPanel>
          <Strip><Cross /></Strip>
          <DockTabs>
            <DockTab $active>构件列表</DockTab>
            <DockTab>图纸管理</DockTab>
          </DockTabs>
          <DockTools>
            <ToolButton><DockIcon name="new" />新建<Caret /></ToolButton>
            <ToolButton><DockIcon name="copy" />复制</ToolButton>
            <ToolButton><DockIcon name="remove" />删除</ToolButton>
            <ToolButton><DockIcon name="layer" />层间复制</ToolButton>
          </DockTools>
          <Search aria-label="搜索构件" placeholder="搜索构件..." />
          <Tree>
            <TreeRow $root>
              <svg width="7" height="7" viewBox="0 0 7 7"><path d="M6.500 .5v6h-6z" fill="#333" /></svg>
              <TreeItem>挑檐</TreeItem>
            </TreeRow>
            {["TY-1", "TY-2", "TY-3"].map((t) => (
              <TreeRow key={t}><TreeItem $leaf $active={t === "TY-3"}>{t}</TreeItem></TreeRow>
            ))}
          </Tree>
          <Strip />
          <DockTabs>
            <DockTab $active>属性列表</DockTab>
            <DockTab>图层管理</DockTab>
          </DockTabs>
          <PropTable>
            <colgroup>
              <col style={{ width: 22 }} />
              <col style={{ width: 101 }} />
              <col style={{ width: 127 }} />
            </colgroup>
            <thead>
              <tr>
                <th aria-label="序号" />
                <th>属性名称</th>
                <th>属性值</th>
              </tr>
            </thead>
            <tbody>
              {props.map((p) => (
                <tr key={p.no}>
                  <NumberCell>{p.no}</NumberCell>
                  <PropName $linked={p.linked}>
                    {p.group ? (
                      <Expandable><Expander $large aria-label="展开"><Sign plus /></Expander>{p.name}</Expandable>
                    ) : p.name}
                  </PropName>
                  <PropValue $locked={p.locked}>{p.value}</PropValue>
                </tr>
              ))}
            </tbody>
          </PropTable>
          <BelowTable />
        </ComponentPanel>
        <Canvas>
          <svg width="1000" height="60" viewBox="465 162 1000 60" fill="none" stroke="#0a7d14" strokeWidth="1.500">
            <path d="M722 172H1038M828 172v50M933 172v50M818 162l20 20M923 162l20 20" />
            <path d="M710 160l6 1.500 4.500 4.500 1.500 6-1.500 6-4.500 4.500-6 1.500-6-1.500-4.500-4.500-1.500-6 1.500-6 4.500-4.500z" />
            <path d="M1465 172H1038v50" stroke="#e00808" />
            <text x="710" y="178" textAnchor="middle" fontSize="16" fill="#fff" stroke="none">D</text>
          </svg>
        </Canvas>
      </Main>
      <Window role="dialog" aria-label="计算设置">
        <WindowTitle>计算设置</WindowTitle>
        <WindowTabs>
          {["计算规则", "节点设置", "箍筋设置", "搭接设置", "箍筋公式"].map((t, i) => (
            <WindowTab key={t} $first={i === 0} $active={t === "搭接设置"}>{t}</WindowTab>
          ))}
        </WindowTabs>
        <WindowBody>
          <GridFrame><LapGrid /></GridFrame>
        </WindowBody>
      </Window>
      <Markup width="1" height="1" fill="none" stroke="#f04545" aria-hidden="true">
        <ellipse cx="97" cy="27" rx="45" ry="20" />
        <ellipse cx="232" cy="77" rx="41" ry="29" />
        <ellipse cx="617" cy="261" rx="37" ry="18" />
        <ellipse cx="988" cy="512" rx="22" ry="30" />
        <g stroke="none">
          <Arrow from={[93, 23]} to={[217, 74]} />
          <Arrow from={[232, 83]} to={[600, 254]} />
          <Arrow from={[616, 262]} to={[977, 492]} />
        </g>
      </Markup>
    </Shell>
  );
}
